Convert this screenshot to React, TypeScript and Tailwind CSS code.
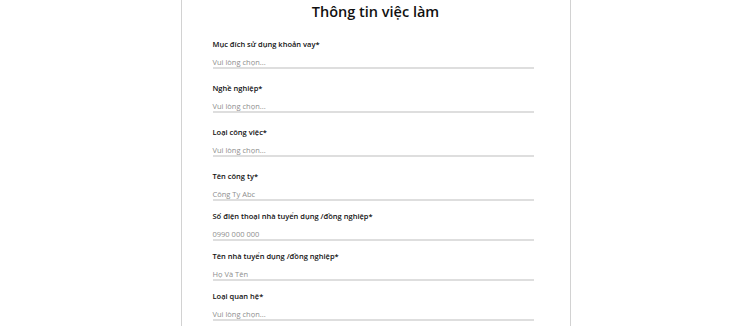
const fields = [
  { label: "Mục đích sử dụng khoản vay*", placeholder: "Vui lòng chọn...", gap: "mt-[15px]" },
  { label: "Nghề nghiệp*", placeholder: "Vui lòng chọn...", gap: "mt-[14px]" },
  { label: "Loại công việc*", placeholder: "Vui lòng chọn...", gap: "mt-[14px]" },
  { label: "Tên công ty*", placeholder: "Công Ty Abc", gap: "mt-[14px]" },
  { label: "Số điện thoại nhà tuyển dụng /đồng nghiệp*", placeholder: "0990 000 000", gap: "mt-[10px]" },
  { label: "Tên nhà tuyển dụng /đồng nghiệp*", placeholder: "Họ Và Tên", gap: "mt-[10px]" },
  { label: "Loại quan hệ*", placeholder: "Vui lòng chọn...", gap: "mt-[10px]" },
];

function Field({ label, placeholder, gap }: { label: string; placeholder: string; gap: string }) {
  return (
    <div className={gap}>
      <div className="text-[7.5px] leading-[10px] font-semibold text-[#111]">{label}</div>
      <div className="mt-[8px] w-[321px] border-b-2 border-[#dedede] text-[7.5px] leading-[10px] text-[#8e8e8e]">
        {placeholder}
      </div>
    </div>
  );
}

export default function App() {
  return (
    <div className="min-h-screen bg-white font-['Open_Sans',sans-serif]">
      <div className="mx-auto w-[390px] h-[326px] overflow-hidden border-x border-[#d2d2d2] px-[31px]">
        <h1 className="h-[24px] text-center text-[14.5px] leading-[24px] font-semibold text-[#111]">
          Thông tin việc làm
        </h1>
        {fields.map((f) => (
          <Field key={f.label} {...f} />
        ))}
      </div>
    </div>
  );
}
